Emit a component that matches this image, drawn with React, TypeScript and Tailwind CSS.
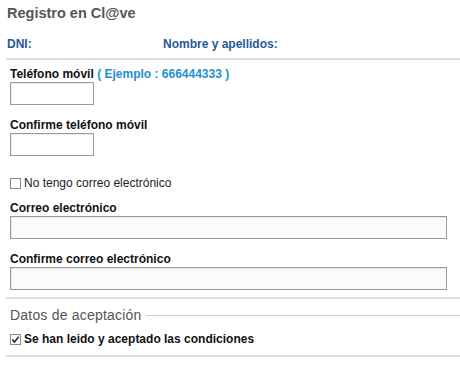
import React from "react";

function TextBox({ wide }: { wide?: boolean }) {
  return (
    <div
      className={
        (wide ? "w-[437px] bg-[#fbfbfb] " : "w-[84px] bg-white ") +
        "h-[23px] border border-[#9a9a9a] shadow-[inset_1px_1px_1px_rgba(0,0,0,0.08)]"
      }
    />
  );
}

function Box({ checked }: { checked?: boolean }) {
  return (
    <span className="inline-flex w-[11px] h-[11px] border border-[#8a8a8a] bg-white items-center justify-center shrink-0">
      {checked && (
        <svg width="9" height="9" viewBox="0 0 9 9">
          <path d="M1.2 4.6 L3.5 7 L7.8 1.6" fill="none" stroke="#222" strokeWidth="1.5" />
        </svg>
      )}
    </span>
  );
}

export default function App() {
  return (
    <div className="w-[460px] h-[365px] bg-white overflow-hidden font-['Liberation_Sans',Arial,sans-serif] text-[#111]">
      <div className="pl-[7px] pt-[3px] leading-[20px] text-[14.5px] font-bold text-[#555]">
        Registro en Cl@ve
      </div>
      <div className="flex pl-[7px] mt-[13px] leading-[16px] text-[12px] font-bold text-[#1f5a9b]">
        <div className="w-[156px]">DNI:</div>
        <div>Nombre y apellidos:</div>
      </div>
      <div className="ml-[6px] mt-[6px] h-[2px] bg-[#dedede]" />
      <div className="pl-[10px] pr-[13px]">
        <div className="mt-[7px] leading-[14px] text-[12px] font-bold">
          Teléfono móvil <span className="text-[#1e8fd3]">( Ejemplo : 666444333 )</span>
        </div>
        <div className="mt-px">
          <TextBox />
        </div>
        <div className="mt-[13px] leading-[14px] text-[12px] font-bold">Confirme teléfono móvil</div>
        <div className="mt-px">
          <TextBox />
        </div>
        <div className="mt-[20px] flex items-center gap-[3px] leading-[14px] text-[12px] text-[#222]">
          <Box />
          <span>No tengo correo electrónico</span>
        </div>
        <div className="mt-[11px] leading-[14px] text-[12px] font-bold">Correo electrónico</div>
        <div className="mt-px">
          <TextBox wide />
        </div>
        <div className="mt-[13px] leading-[14px] text-[12px] font-bold">Confirme correo electrónico</div>
        <div className="mt-px">
          <TextBox wide />
        </div>
      </div>
      <div className="ml-[6px] mt-[7px] h-[2px] bg-[#dedede]" />
      <div className="flex items-center pl-[10px] mt-[8px] leading-[16px]">
        <span className="text-[14px] text-[#555] tracking-[0.2px]">Datos de aceptación</span>
        <div className="flex-1 ml-[5px] h-px bg-[#cfcfcf]" />
      </div>
      <div className="mt-[9px] pl-[10px] flex items-center gap-[3px] leading-[14px] text-[12px] font-bold">
        <Box checked />
        <span>Se han leido y aceptado las condiciones</span>
      </div>
      <div className="ml-[6px] mt-[9px] h-[2px] bg-[#dedede]" />
    </div>
  );
}
